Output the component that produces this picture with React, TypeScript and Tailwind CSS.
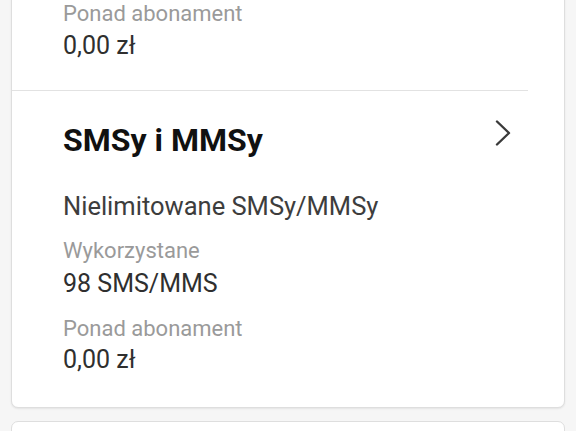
import React from "react";

function Chevron() {
  return (
    <svg width="20" height="28" viewBox="0 0 20 28" fill="none" className="block">
      <path d="M4 2.5 L16 14 L4 25.5" stroke="#3a3a3a" strokeWidth="2.4" strokeLinecap="round" strokeLinejoin="round" />
    </svg>
  );
}

function Label({ children, className = "" }: { children: React.ReactNode; className?: string }) {
  return <div className={`text-[22px] leading-[26px] text-[#9a9a9a] ${className}`}>{children}</div>;
}

function Value({ children, className = "" }: { children: React.ReactNode; className?: string }) {
  return <div className={`text-[25px] leading-[30px] text-[#2f2f2f] ${className}`}>{children}</div>;
}

export default function App() {
  return (
    <div
      className="w-[576px] h-[431px] overflow-hidden bg-[#f6f6f6] px-[11px]"
      style={{ fontFamily: "Roboto, 'Noto Sans', sans-serif" }}
    >
      <div className="-mt-[10px] bg-white border border-[#dedede] rounded-[7px] shadow-[0_1px_2px_rgba(0,0,0,0.08)]">
        <div className="px-[51px] pt-[10px] pb-[29px]">
          <Label>Ponad abonament</Label>
          <Value className="mt-[4px]">0,00 zł</Value>
        </div>
        <div className="h-px bg-[#e2e2e2] mr-[36px]" />
        <div className="pl-[51px] pr-[51px] pt-[31px] pb-[32px]">
          <div className="flex justify-between items-start">
            <div className="text-[32px] leading-[36px] font-bold text-[#111111]">SMSy i MMSy</div>
            <div className="mt-[-3px]">
              <Chevron />
            </div>
          </div>
          <div className="mt-[33px] text-[25.5px] leading-[30px] text-[#3d3d3d]">Nielimitowane SMSy/MMSy</div>
          <Label className="mt-[17px]">Wykorzystane</Label>
          <Value className="mt-[5px]">98 SMS/MMS</Value>
          <Label className="mt-[17px]">Ponad abonament</Label>
          <Value className="mt-[3px]">0,00 zł</Value>
        </div>
      </div>
      <div className="mt-[13px] h-[40px] bg-white border border-[#dedede] rounded-[7px]" />
    </div>
  );
}
